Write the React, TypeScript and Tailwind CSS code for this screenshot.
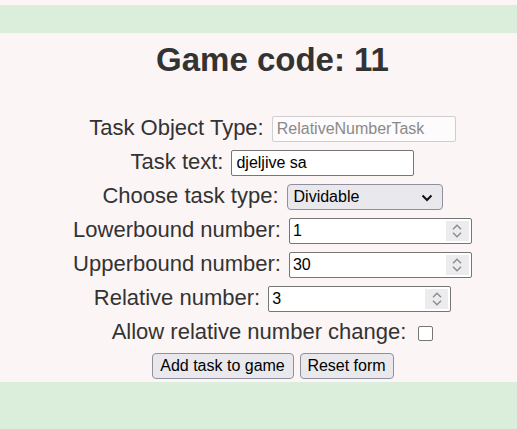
import React from "react";

const Spin: React.FC = () => (
  <div className="absolute right-[3px] top-[3px] bottom-[3px] w-[23px] bg-[#ececef] flex flex-col items-center justify-center gap-[2px]">
    <svg width="10" height="6" viewBox="0 0 10 6" fill="none" stroke="#8a8a8a" strokeWidth="1.3">
      <path d="M1 5.2L5 1.2L9 5.2" />
    </svg>
    <svg width="10" height="6" viewBox="0 0 10 6" fill="none" stroke="#8a8a8a" strokeWidth="1.3">
      <path d="M1 0.8L5 4.8L9 0.8" />
    </svg>
  </div>
);

const NumberField: React.FC<{ value: string; width: string }> = ({ value, width }) => (
  <div className={`relative h-[26px] ${width}`}>
    <input
      type="text"
      defaultValue={value}
      className="block w-full h-full border border-[#767676] rounded-[2px] bg-white pl-[3px] pr-[28px] text-[16px] text-black outline-none"
    />
    <Spin />
  </div>
);

const Row: React.FC<{ label: string; children: React.ReactNode }> = ({ label, children }) => (
  <div className="h-[34px] flex items-center justify-center gap-[8px]">
    <span className="mb-[4px] leading-[25px]">{label}</span>
    {children}
  </div>
);

export default function App() {
  return (
    <div className="w-[517px] h-[429px] bg-[#fcf5f5] flex flex-col text-[#333333] font-['Liberation_Sans',Arial,sans-serif] text-[22px]">
      <div className="h-[5px] shrink-0" />
      <div className="h-[28px] shrink-0 bg-[#dbeddb]" />
      <div className="flex flex-col pl-[28px] shrink-0">
        <h1 className="h-[79px] pt-[8px] text-center text-[33px] leading-[38px] font-bold">Game code: 11</h1>
        <Row label="Task Object Type:">
          <input
            type="text"
            placeholder="RelativeNumberTask"
            disabled
            className="block w-[184px] h-[26px] border border-[#cfcfcf] rounded-[2px] bg-[#fdfbfb] px-[4px] text-[16px] placeholder:text-[#8a8a8a] outline-none"
          />
        </Row>
        <Row label="Task text:">
          <input
            type="text"
            defaultValue="djeljive sa"
            className="block w-[183px] h-[26px] border border-[#767676] rounded-[2px] bg-white px-[4px] text-[16px] text-black outline-none"
          />
        </Row>
        <Row label="Choose task type:">
          <div className="relative w-[156px] h-[26px] border border-[#8f8f9d] rounded-[4px] bg-[#e9e9ed] flex items-center pl-[6px] text-[16px] text-black">
            Dividable
            <svg className="absolute right-[9px] top-[9px]" width="12" height="8" viewBox="0 0 12 8" fill="none" stroke="#111" strokeWidth="2">
              <path d="M1.5 1.5L6 6L10.5 1.5" />
            </svg>
          </div>
        </Row>
        <Row label="Lowerbound number:">
          <NumberField value="1" width="w-[183px]" />
        </Row>
        <Row label="Upperbound number:">
          <NumberField value="30" width="w-[183px]" />
        </Row>
        <Row label="Relative number:">
          <NumberField value="3" width="w-[183px]" />
        </Row>
        <div className="h-[34px] flex items-center justify-center gap-[12px]">
          <span className="mb-[4px] leading-[25px]">Allow relative number change:</span>
          <span className="w-[15px] h-[15px] border-[1.5px] border-[#767676] rounded-[2px] bg-white" />
        </div>
        <div className="h-[32px] flex items-center justify-center gap-[6px] text-[16px] text-black">
          <button className="h-[26px] w-[142px] border border-[#8f8f9d] rounded-[4px] bg-[#e9e9ed]">Add task to game</button>
          <button className="h-[26px] w-[94px] border border-[#8f8f9d] rounded-[4px] bg-[#e9e9ed]">Reset form</button>
        </div>
      </div>
      <div className="flex-1 bg-[#dbeddb]" />
    </div>
  );
}
